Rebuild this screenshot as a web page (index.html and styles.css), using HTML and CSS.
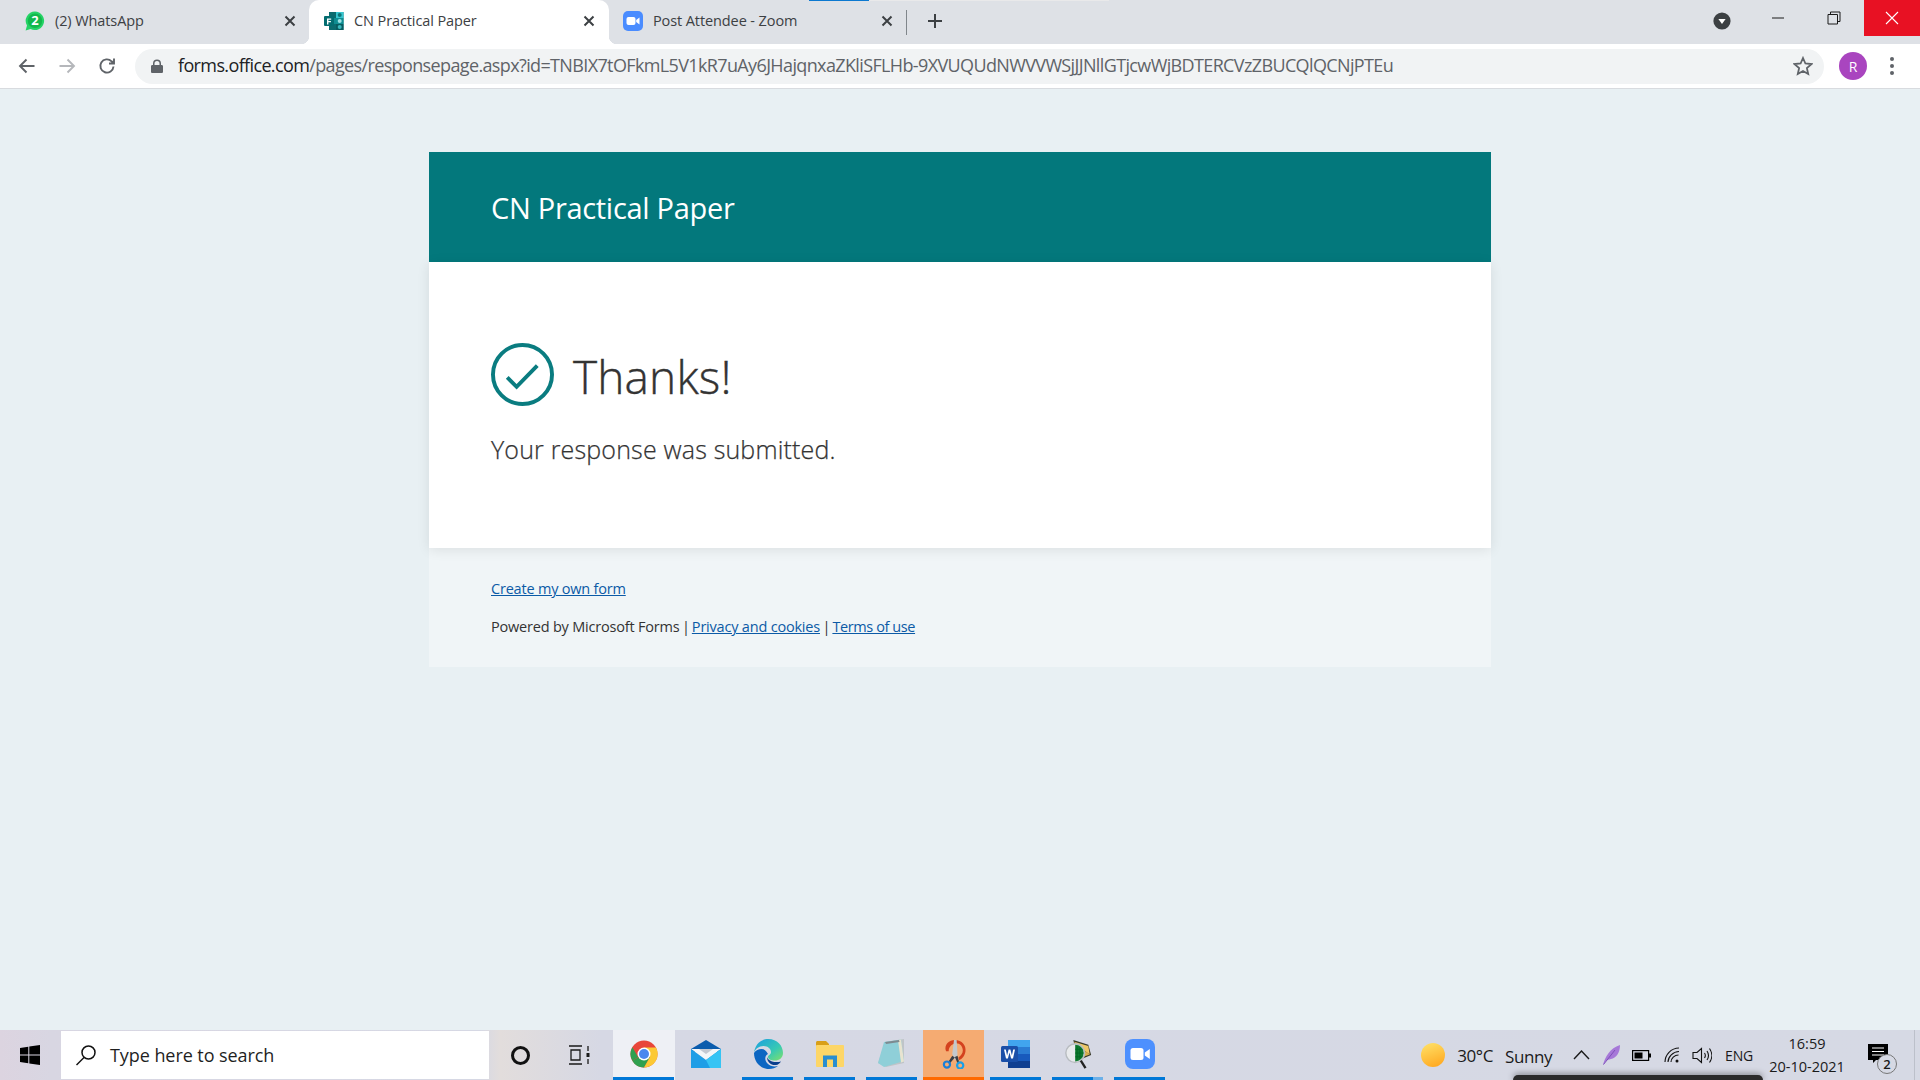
FILE: index.html
```html
<!DOCTYPE html>
<html lang="en">
<head>
<meta charset="utf-8">
<title>CN Practical Paper</title>
<link rel="stylesheet" href="styles.css">
</head>
<body>
<div class="screen">
  <header class="chrome">
    <div class="tabstrip">
      <div class="loadbar"></div>
      <div class="tab tab-first">
        <svg class="favicon" viewBox="0 0 20 20"><path d="M10 .5a9.3 9.3 0 0 0-8 14L.6 19.5l5-1.4A9.3 9.3 0 1 0 10 .5z" fill="#25d366"/><circle cx="10" cy="9.8" r="7.2" fill="#12b84c"/><text x="10" y="14" class="wa-num">2</text></svg>
        <span class="tab-title">(2) WhatsApp</span>
        <svg class="tab-x" viewBox="0 0 12 12"><path d="M1.5 1.5l9 9M10.5 1.5l-9 9"/></svg>
      </div>
      <div class="tab tab-active">
        <svg class="favicon" viewBox="0 0 20 20"><rect x="5" y="1" width="14.5" height="18" fill="#0b6a6e"/><rect x="12" y="1" width="7.5" height="6" fill="#37c6d0"/><rect x="5" y="7" width="7" height="6" fill="#108b90"/><rect x="12" y="7" width="7.5" height="6" fill="#0f8f94"/><rect x="12" y="13" width="7.5" height="6" fill="#075c60"/><circle cx="15.7" cy="4" r="2" fill="#0f7478"/><circle cx="15.7" cy="10" r="2" fill="#9fe2e4"/><circle cx="15.7" cy="16" r="2" fill="#3ab8bd"/><rect x="0" y="5" width="10" height="10" rx="1" fill="#036c70"/><path d="M3 7.5h4.2v1.2H4.4v1.3h2.5v1.2H4.4v2.2H3z" fill="#fff"/></svg>
        <span class="tab-title">CN Practical Paper</span>
        <svg class="tab-x" viewBox="0 0 12 12"><path d="M1.5 1.5l9 9M10.5 1.5l-9 9"/></svg>
      </div>
      <div class="tab tab-last">
        <svg class="favicon" viewBox="0 0 20 20"><rect width="20" height="20" rx="5" fill="#4a8cff"/><rect x="3.5" y="6" width="9" height="8" rx="2" fill="#fff"/><path d="M13.2 9l3.3-2.4v6.8L13.2 11z" fill="#fff"/></svg>
        <span class="tab-title">Post Attendee - Zoom</span>
        <svg class="tab-x" viewBox="0 0 12 12"><path d="M1.5 1.5l9 9M10.5 1.5l-9 9"/></svg>
      </div>
      <div class="tab-sep"></div>
      <svg class="newtab" viewBox="0 0 16 16"><path d="M8 1v14M1 8h14"/></svg>
      <div class="strip-right">
        <svg class="tabsearch" viewBox="0 0 18 18"><circle cx="9" cy="9" r="8.6" fill="#3c4043"/><path d="M5.4 7h7.2L9 12z" fill="#fff"/></svg>
        <div class="winbtn"><svg viewBox="0 0 14 14"><path d="M1 7h12" class="wb"/></svg></div>
        <div class="winbtn"><svg viewBox="0 0 14 14"><path d="M1 3.5h9.5V13H1zM3.5 3.5V1H13v9.5h-2.5" class="wb"/></svg></div>
        <div class="winbtn winclose"><svg viewBox="0 0 14 14"><path d="M1 1l12 12M13 1L1 13" class="wb wb-white"/></svg></div>
      </div>
    </div>
    <div class="toolbar">
      <svg class="navicon" viewBox="0 0 18 18"><path d="M16.5 9H2.5M8.5 2.5L2 9l6.5 6.5"/></svg>
      <svg class="navicon nav-off" viewBox="0 0 18 18"><path d="M1.5 9h14M9.5 2.5L16 9l-6.5 6.5"/></svg>
      <svg class="navicon nav-reload" viewBox="0 0 18 18"><path d="M15.5 9.500a6.600 6.600 0 1 1-1.900-5.200L16 6.500M16 1.500v5h-5"/></svg>
      <div class="omnibox">
        <svg class="lock" viewBox="0 0 12 14"><path d="M2 6V4.500a4 4 0 0 1 8 0V6h.7c.7 0 1.300.6 1.300 1.300v5.400c0 .7-.6 1.300-1.300 1.300H1.300C.6 14 0 13.400 0 12.700V7.300C0 6.600.6 6 1.300 6zm1.500 0h5V4.500a2.500 2.500 0 0 0-5 0z"/></svg>
        <div class="url"><span class="url-host">forms.office.com</span>/pages/responsepage.aspx?id=TNBIX7tOFkmL5V1kR7uAy6JHajqnxaZKliSFLHb-9XVUQUdNWVVWSjJJNllGTjcwWjBDTERCVzZBUCQlQCNjPTEu</div>
        <svg class="star" viewBox="0 0 20 20"><path d="M10 2l2.400 5.500 6 .6-4.500 4 1.300 5.900L10 15l-5.200 3 1.300-5.900-4.500-4 6-.6z"/></svg>
      </div>
      <div class="avatar">R</div>
      <div class="dots"><i></i><i></i><i></i></div>
    </div>
  </header>

  <main class="page">
    <section class="card">
      <div class="card-head"><h1 class="form-title">CN Practical Paper</h1></div>
      <div class="card-body">
        <div class="thanks-row">
          <svg class="check" viewBox="0 0 64 64"><circle cx="32" cy="32" r="30" /><path d="M16.500 35L26 44.500 47 23"/></svg>
          <h2 class="thanks">Thanks!</h2>
        </div>
        <p class="submitted">Your response was submitted.</p>
      </div>
      <footer class="card-foot">
        <p class="foot-line"><a href="#">Create my own form</a></p>
        <p class="foot-line foot-second">Powered by Microsoft Forms <span class="foot-sep">|</span> <a href="#">Privacy and cookies</a> <span class="foot-sep">|</span> <a class="foot-terms" href="#">Terms of use</a></p>
      </footer>
    </section>
  </main>

  <footer class="taskbar">
    <div class="startbtn">
      <svg viewBox="0 0 20 20"><path d="M0 2.900L8.300 1.700v7.700H0zM9.300 1.600L20 0v9.400H9.300zM0 10.500h8.300v7.800L0 17.100zM9.300 10.500H20V20L9.300 18.400z" fill="#000"/></svg>
    </div>
    <div class="searchbox">
      <svg viewBox="0 0 22 22"><circle cx="13.500" cy="8.500" r="6.500"/><path d="M9 13.500L1.500 21"/></svg>
      <span>Type here to search</span>
    </div>
    <div class="sysbtn"><div class="cortana"></div></div>
    <div class="sysbtn">
      <svg class="taskview" viewBox="0 0 22 20"><path d="M1 1h13M1 19h13M3 5h9v10H3zM20 1v5M20 14v5"/><rect x="18.500" y="8" width="3" height="4" fill="#1a1a1a" stroke="none"/></svg>
    </div>
    <div class="apps">
      <div class="app app-open-active">
        <svg viewBox="0 0 28 28"><circle cx="14" cy="14" r="13.500" fill="#e8463a"/><path d="M14 14L2.300 20.750A13.500 13.500 0 0 0 14 27.500L20 17z" fill="#2fa04f"/><path d="M14 7.500h12A13.500 13.500 0 0 1 14 27.500L20 17z" fill="#fcc934"/><path d="M2.400 7.200L8 17 2.300 20.750A13.500 13.500 0 0 1 2.400 7.200z" fill="#2fa04f"/><circle cx="14" cy="14" r="6.500" fill="#fff"/><circle cx="14" cy="14" r="5" fill="#4a87ee"/></svg>
      </div>
      <div class="app">
        <svg class="ico-wide" viewBox="0 0 30 28"><path d="M0 9L15 0l15 9v3H0z" fill="#0b5cad"/><path d="M0 9h30L15 20z" fill="#f4f6f8"/><path d="M8 9h14l-7 5z" fill="#c4c9d2"/><path d="M0 9l15 11 15-11v19H0z" fill="#1f9ee6"/><path d="M15 20l15-11v19H19z" fill="#36c4f4"/></svg>
      </div>
      <div class="app app-open">
        <svg viewBox="0 0 30 30"><path d="M1 14C2 5 8 0 15.500 0 24 0 30 6.500 30 14c0 5-4 7.500-8 7.500-3.500 0-7-1-7-3.500 0-2 3-2 3-5 0-3-3-6-7.500-6S2 10 1 14z" fill="url(#edgeA)"/><path d="M1 14c0 9 6.500 16 15 16 3.500 0 6.500-1 9-3-3 1-8 .5-10.500-2.500C11 21 12 16 15 15c-2-3.500-4-5-6-5-4 0-7 2-8 4z" fill="#0c66c2"/><path d="M14 18c0 5 4 8.500 9 8 2-.2 4-1.800 5-3.800-2 1-6 1.300-9 .3-3-1-4.500-3-5-4.500z" fill="#0a3e8c"/><defs><linearGradient id="edgeA" x1="0" y1="0" x2="1" y2="1"><stop offset="0" stop-color="#1b9de2"/><stop offset=".6" stop-color="#37c9b4"/><stop offset="1" stop-color="#7fe06a"/></linearGradient></defs></svg>
      </div>
      <div class="app app-open">
        <svg class="ico-folder" viewBox="0 0 28 26"><path d="M0 1.500C0 .7.700 0 1.500 0H10l3 3v3H0z" fill="#d99f18"/><rect x="0" y="4" width="28" height="22" rx="1" fill="#fdd667"/><path d="M7 26V14.500h14V26h-4v-7.500h-6V26z" fill="#2a8ed0"/></svg>
      </div>
      <div class="app app-open">
        <svg viewBox="0 0 28 30"><path d="M7 3l19-3v24L8 28 0 24z" fill="#bfc4c8"/><path d="M6 3l17-2.500L26 22 6 28 0 24z" fill="#8fcfd8"/><path d="M20 1l3-.5 3 22-3 1z" fill="#e8e4d0"/><path d="M7 3l14-2 .5 2L8 5z" fill="#7d8a90"/></svg>
      </div>
      <div class="app app-snip">
        <svg viewBox="0 0 28 34"><path d="M5 14C2 6 9 1 15 1c8 0 13 6 12 13-.5 5-4 9-7 10l-1-3c3-2 5-5 5-8 0-5-4-9-9-8-4 1-7 4-7 9z" fill="#d4421e"/><path d="M14 1l3 0 1 17-3 7-3-8z" fill="#c4c8cc"/><path d="M12 19L7 27l2 1 6-7zM18 19l2 8-2 .5-3-7z" fill="#3b3f46"/><circle cx="6" cy="29" r="3.500" fill="none" stroke="#1b7fd6" stroke-width="2.500"/><circle cx="21" cy="30" r="3.500" fill="none" stroke="#1b9fe6" stroke-width="2.500"/></svg>
      </div>
      <div class="app app-open">
        <svg viewBox="0 0 30 30"><rect x="7" y="1" width="22" height="28" rx="1.500" fill="#2b7cd3"/><rect x="7" y="1" width="22" height="7" fill="#41a5ee"/><rect x="7" y="15" width="22" height="7" fill="#185abd"/><rect x="7" y="22" width="22" height="7" fill="#103f91"/><rect x="0" y="7" width="17" height="16" rx="1.500" fill="#1a4fa8"/><path d="M3 10.500h1.800l1.300 6 1.500-6h1.800l1.500 6 1.300-6h1.800L12 19.500h-1.900L8.500 13.500 6.900 19.500H5z" fill="#fff"/></svg>
      </div>
      <div class="app app-open app-open-split">
        <svg viewBox="0 0 28 32"><path d="M9 1l16 5 3 11-14 6z" fill="#3a3a2a"/><path d="M10 3l15 4.500 1.500 9L15 8z" fill="#eec766"/><path d="M10 3l5 5 11.500 8.500L14 21z" fill="#d9b04f"/><circle cx="11" cy="15" r="10" fill="#e8eaec" stroke="#b8bcc0" stroke-width="1.500"/><path d="M11 6a9 9 0 0 1 0 18z" fill="#0f7a2f"/><path d="M13 8v14M16 9v12M11 11h8M11 15h9M11 19h8" stroke="#062" stroke-width=".8"/><path d="M17 23l5 8" stroke="#222" stroke-width="2.500"/></svg>
      </div>
      <div class="app app-open">
        <svg viewBox="0 0 30 30"><rect width="30" height="30" rx="8" fill="#4d90fe"/><rect x="5.500" y="9" width="13" height="12" rx="2.500" fill="#fff"/><path d="M19.800 13.500l5-3.500v10l-5-3.500z" fill="#fff"/></svg>
      </div>
    </div>
    <div class="tray">
      <div class="sun"></div>
      <span class="weather-temp">30°C</span>
      <span class="weather-word">Sunny</span>
      <svg class="chev" viewBox="0 0 17 10"><path d="M1 9l7.500-8L16 9"/></svg>
      <svg class="feather" viewBox="0 0 18 20"><path d="M1 20C3 12 8 3 18 0c0 8-4 13-9 14-2 .5-4 1-5 2z" fill="#a678d8"/><path d="M1.500 19.500L13 5" stroke="#7d4fb8" stroke-width="1" fill="none"/></svg>
      <svg class="battery" viewBox="0 0 19 11"><rect x=".6" y=".6" width="16" height="9.800" fill="none" stroke="#000" stroke-width="1.200"/><rect x="2.500" y="2.500" width="8" height="6" fill="#000"/><rect x="17" y="3.500" width="2" height="4" fill="#000"/></svg>
      <svg class="wifi" viewBox="0 0 16 16"><path d="M1 15C1 8 7 1 15 1M4 15c0-5 5-10.500 11-10.500M7 15c0-3.500 3.500-7 7.500-7"/><circle cx="13" cy="14" r="1.500" fill="#111" stroke="none"/></svg>
      <svg class="speaker" viewBox="0 0 20 17"><path d="M1 5.500h4L9.500 1.500v14L5 11.500H1zM12.500 6c1 1.500 1 3.500 0 5M15 4c1.800 2.700 1.800 6.300 0 9M17.500 1.500c3 4.200 3 9.800 0 14"/></svg>
      <span class="lang">ENG</span>
      <div class="clock"><span>16:59</span><span>20-10-2021</span></div>
      <div class="notify">
        <svg viewBox="0 0 20 20"><path d="M0 0h20v16H8l-3 3v-3H0z" fill="#000"/><path d="M4 4h12M4 7.500h12M4 11h12" stroke="#fff" stroke-width="1"/></svg>
        <span class="badge">2</span>
      </div>
      <div class="tray-end"></div>
    </div>
    <div class="peek"></div>
  </footer>
</div>
</body>
</html>
```

FILE: styles.css
```css
* { box-sizing: border-box; }
html, body { margin: 0; padding: 0; }
body { font-family: "Open Sans", "Noto Sans", sans-serif; }
.screen { width: 1920px; height: 1080px; display: flex; flex-direction: column; overflow: hidden; background: #e8f0f3; }

/* browser chrome */
.chrome { flex: none; background: #fff; }
.tabstrip { position: relative; height: 44px; background: #dee1e6; display: flex; align-items: stretch; }
.loadbar { position: absolute; left: 809px; top: 0; width: 300px; height: 1px; background: linear-gradient(90deg, #0b78d0 0, #0b78d0 20%, #e9e9ea 20%, #e9e9ea 100%); }
.tab { position: relative; display: flex; align-items: center; flex: none; padding-bottom: 2px; }
.tab-first { width: 309px; padding-left: 25px; padding-right: 13px; }
.tab-active { width: 300px; padding-left: 15px; padding-right: 14px; background: #fff; border-radius: 10px 10px 0 0; }
.tab-active::before, .tab-active::after { content: ""; position: absolute; bottom: 0; width: 8px; height: 8px; }
.tab-active::before { left: -8px; background: radial-gradient(circle at 0 0, transparent 8px, #fff 8.500px); }
.tab-active::after { right: -8px; background: radial-gradient(circle at 100% 0, transparent 8px, #fff 8.500px); }
.tab-last { width: 297px; padding-left: 14px; padding-right: 13px; }
.favicon { width: 20px; height: 20px; flex: none; }
.wa-num { font: 700 13px "Open Sans", sans-serif; fill: #fff; text-anchor: middle; }
.tab-title { flex: 1; margin-left: 10px; padding-bottom: 2px; font-size: 14.500px; color: #3c4043; white-space: nowrap; letter-spacing: -.1px; }
.tab-x { width: 12px; height: 12px; flex: none; fill: none; stroke: #3c4043; stroke-width: 2; }
.tab-sep { width: 1px; height: 25px; align-self: center; background: #80868b; }
.newtab { width: 16px; height: 16px; align-self: center; margin-left: 20px; margin-bottom: 2px; fill: none; stroke: #3c4043; stroke-width: 2; }
.strip-right { margin-left: auto; display: flex; align-items: flex-start; }
.tabsearch { width: 18px; height: 18px; margin-top: 12px; margin-right: 19px; }
.winbtn { width: 56px; height: 36px; display: flex; align-items: center; justify-content: center; }
.winbtn svg { width: 14px; height: 14px; }
.wb { fill: none; stroke: #1a1a1a; stroke-width: 1; }
.wb-white { stroke: #fff; stroke-width: 1.100; }
.winclose { margin-left: 2px; background: #e81123; }

.toolbar { height: 45px; display: flex; align-items: center; padding-left: 18px; border-bottom: 1px solid #d8dbdf; }
.navicon { width: 18px; height: 18px; flex: none; margin-right: 22px; fill: none; stroke: #5f6368; stroke-width: 1.900; }
.nav-off { stroke: #b5b7bb; }
.nav-reload { margin-right: 19px; }
.omnibox { width: 1689px; height: 35px; flex: none; border-radius: 18px; background: #f1f3f4; display: flex; align-items: center; padding-left: 16px; padding-right: 11px; }
.lock { width: 12px; height: 14px; flex: none; fill: #5f6368; }
.url { flex: 1; margin-left: 15px; padding-bottom: 2px; font-size: 18px; color: #5f6368; white-space: nowrap; letter-spacing: -.63px; overflow: hidden; }
.url-host { color: #202124; }
.star { width: 20px; height: 20px; flex: none; fill: none; stroke: #5f6368; stroke-width: 1.800; }
.avatar { width: 28px; height: 28px; flex: none; margin-left: 15px; border-radius: 50%; background: #a945bf; color: #fff; font-size: 14px; display: flex; align-items: center; justify-content: center; }
.dots { flex: none; margin-left: 23px; display: flex; flex-direction: column; gap: 3px; }
.dots i { display: block; width: 4px; height: 4px; border-radius: 50%; background: #5f6368; }

/* page */
.page { flex: 1; min-height: 0; padding-top: 63px; display: flex; justify-content: center; }
.card { width: 1062px; height: 515px; background: #f0f5f7; }
.card-head { height: 110px; background: #03787c; padding-left: 62px; padding-top: 36px; }
.form-title { margin: 0; font-size: 29px; line-height: 40px; font-weight: 400; color: #fff; letter-spacing: -.3px; }
.card-body { height: 286px; background: #fff; padding-left: 62px; padding-top: 81px; box-shadow: 0 2px 12px rgba(0,0,0,.09); position: relative; }
.thanks-row { display: flex; align-items: center; gap: 19px; height: 63px; }
.check { width: 63px; height: 63px; flex: none; fill: none; stroke: #0a7c80; stroke-width: 4; }
.thanks { margin: 0; font-size: 46px; line-height: 63px; font-weight: 300; color: #333; letter-spacing: .15px; position: relative; top: 2px; -webkit-text-stroke: .4px #333; }
.submitted { margin: 26px 0 0; font-size: 25px; line-height: 34px; font-weight: 300; color: #333; letter-spacing: .17px; -webkit-text-stroke: .25px #333; }
.card-foot { padding: 30px 62px 0; font-size: 14.500px; color: #333; letter-spacing: -.2px; }
.foot-line { margin: 0; line-height: 22px; }
.foot-second { margin-top: 16px; }
.foot-sep { margin: 0 -1.500px 0 -1px; }
.foot-terms { letter-spacing: -.4px; }
.card-foot a { color: #0b5aa6; text-decoration: underline; }

/* taskbar */
.taskbar { position: relative; flex: none; height: 50px; display: flex; align-items: stretch; background: linear-gradient(90deg, #dcd4e0 0, #d8d6e2 50px, #d6d8e4 480px, #e2dddc 500px, #d6d8e4 600px, #d6d9e4 100%); }
.startbtn { width: 61px; flex: none; display: flex; align-items: center; justify-content: center; padding-right: 2px; }
.startbtn svg { width: 20px; height: 20px; }
.searchbox { width: 428px; flex: none; margin: 1px 0; background: #fff; display: flex; align-items: center; padding-left: 14px; gap: 13px; font-size: 18px; color: #1f1f1f; letter-spacing: -.07px; }
.searchbox svg { width: 22px; height: 22px; fill: none; stroke: #111; stroke-width: 1.500; }
.sysbtn { width: 62px; flex: none; display: flex; align-items: center; justify-content: center; }
.cortana { width: 19px; height: 19px; border-radius: 50%; border: 3px solid #111; }
.taskview { width: 22px; height: 20px; margin-right: 7px; fill: none; stroke: #1a1a1a; stroke-width: 1.300; }
.apps { display: flex; flex: none; }
.app { position: relative; width: 62px; flex: none; display: flex; align-items: center; justify-content: center; padding-bottom: 2px; }
.app svg { width: 30px; height: 30px; }
.app .ico-wide { width: 30px; height: 28px; }
.app .ico-folder { width: 28px; height: 26px; }
.app-open-active { background: #eef0f5; }
.app-open-active svg { width: 28px; height: 28px; }
.app-open-active::after, .app-open::after { content: ""; position: absolute; left: 5px; right: 6px; bottom: 0; height: 3px; background: #0078d7; }
.app-open-active::after { left: 0; right: 1px; }
.app-open-split::before { content: ""; position: absolute; right: 6px; width: 10px; bottom: 0; height: 3px; background: #6cb0e8; z-index: 1; }
.app-snip { width: 61px; margin-right: 1px; background: #f5ab72; }
.app-snip::after { content: ""; position: absolute; left: 0; right: 0; bottom: 0; height: 3px; background: #ff6a00; }
.tray { margin-left: auto; display: flex; align-items: center; font-size: 17px; color: #1a1a1a; }
.sun { width: 24px; height: 24px; border-radius: 50%; background: linear-gradient(160deg, #ffe36a, #ffa31a); flex: none; margin-right: 1px; }
.weather-temp { margin-left: 11px; letter-spacing: -.4px; }
.weather-word { margin-left: 12px; letter-spacing: -.4px; position: relative; top: 1px; }
.chev { width: 17px; height: 10px; margin-left: 21px; fill: none; stroke: #1a1a1a; stroke-width: 1.400; }
.feather { width: 18px; height: 20px; margin-left: 12px; }
.battery { width: 19px; height: 11px; margin-left: 12px; }
.wifi { width: 16px; height: 16px; margin-left: 13px; fill: none; stroke: #111; stroke-width: 1.100; }
.speaker { width: 20px; height: 17px; margin-left: 12px; fill: none; stroke: #111; stroke-width: 1.100; }
.lang { margin-left: 13px; font-size: 14px; letter-spacing: -.2px; }
.clock { width: 76px; margin-left: 16px; display: flex; flex-direction: column; align-items: center; font-size: 14.500px; line-height: 23px; white-space: nowrap; letter-spacing: 0; }
.notify { position: relative; width: 20px; height: 20px; margin-left: 23px; margin-top: -2px; }
.notify svg { width: 20px; height: 20px; display: block; }
.badge { position: absolute; left: 9px; top: 10px; width: 20px; height: 20px; border-radius: 50%; border: 1px solid #777; background: #d6d9e4; font-size: 13px; font-weight: 600; display: flex; align-items: center; justify-content: center; }
.tray-end { width: 27px; height: 50px; border-right: 1px solid #bcc0ca; margin-right: 5px; }
.peek { position: absolute; left: 1513px; bottom: 0; width: 250px; height: 5px; background: #2b2b2b; border-radius: 6px 6px 0 0; box-shadow: 0 -1px 6px rgba(0,0,0,.45); }
```
